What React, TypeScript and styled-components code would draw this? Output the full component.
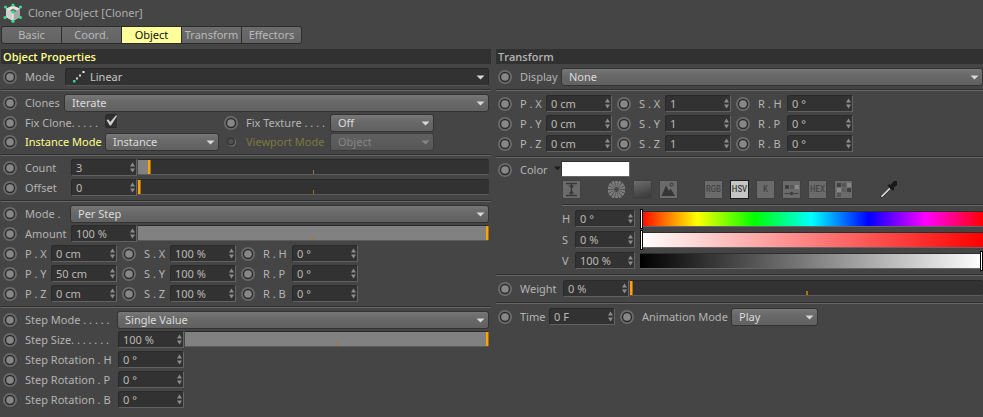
import React, { useId, useState } from "react";
import styled, { createGlobalStyle, css } from "styled-components";

const GlobalStyle = createGlobalStyle`
  *, *::before, *::after { box-sizing: border-box; }
  html { background: #454545; }
  body {
    margin: 0;
    background: #454545;
    color: #b4b4b4;
    font: 11px/16px "Noto Sans", "Open Sans", sans-serif;
  }
  button, input, select { font: inherit; color: inherit; margin: 0; padding: 0; border: 0; }
`;

const Page = styled.main`
  padding-left: 1px;
`;

const TitleBar = styled.header`
  display: flex;
  align-items: center;
  gap: 5px;
  height: 26px;
  padding-left: 2px;
  color: #adadad;
  h1 { margin: 0; font: inherit; }
`;

const Tabs = styled.nav`
  display: flex;
  width: max-content;
  margin: 0 0 5px;
  border: 1px solid #2c2c2c;
  border-radius: 3px;
  background: #2c2c2c;
  gap: 1px;
  overflow: hidden;
`;

const Tab = styled.button<{ $active?: boolean }>`
  width: 59px;
  height: 16px;
  line-height: 16px;
  white-space: nowrap;
  background: ${(p) => (p.$active ? "#ffff99" : "linear-gradient(#6c6c6c, #626262)")};
  color: ${(p) => (p.$active ? "#111" : "#b9b9b9")};
`;

const Columns = styled.div`
  display: grid;
  grid-template-columns: 490fr 487fr;
  gap: 5px;
`;

const Panel = styled.section`
  min-width: 0;
`;

const PanelHeading = styled.h2<{ $active?: boolean }>`
  margin: 0 0 3px;
  padding-left: 2px;
  height: 15px;
  font: 600 11px/15px "Open Sans", "Noto Sans", sans-serif;
  background: #313131;
  color: ${(p) => (p.$active ? "#ffff8f" : "#b4b4b4")};
`;

const Separator = styled.hr`
  height: 2px;
  margin: 2px 0;
  border: 0;
  border-top: 1px solid #2f2f2f;
  background: #666;
`;

const Group = styled.div<{ $flush?: boolean; $roomy?: boolean }>`
  padding: ${(p) => (p.$roomy ? "1px" : "0")} ${(p) => (p.$flush ? "0" : "2px")} 0 2px;
`;

const Row = styled.div<{ $h?: number }>`
  display: flex;
  align-items: flex-start;
  height: ${(p) => p.$h ?? 20}px;
  padding-top: 1px;
`;

const Key = styled.button<{ $gap?: boolean }>`
  flex: none;
  display: flex;
  align-items: center;
  justify-content: center;
  width: 14px;
  height: 18px;
  margin: 0 8px 0 ${(p) => (p.$gap ? 5 : 0)}px;
  background: none;
`;

const Label = styled.label<{ $w: number; $tone?: "active" | "disabled" }>`
  flex: none;
  width: ${(p) => p.$w}px;
  height: 18px;
  line-height: 18px;
  white-space: nowrap;
  color: ${(p) => (p.$tone === "active" ? "#ffff8f" : p.$tone === "disabled" ? "#7b7a3d" : "#b4b4b4")};
`;

const Control = styled.div<{ $w?: number }>`
  position: relative;
  flex: ${(p) => (p.$w ? "none" : "1")};
  min-width: 0;
  width: ${(p) => (p.$w ? p.$w + "px" : "auto")};
  > svg { position: absolute; pointer-events: none; }
`;

const SelectBox = styled.select<{ $dark?: boolean; $indent?: number }>`
  display: block;
  appearance: none;
  width: 100%;
  height: 18px;
  line-height: 16px;
  padding: 0 18px 0 ${(p) => p.$indent ?? 7}px;
  border: 1px solid #333;
  border-radius: 3px;
  outline: 0;
  color: #dcdcdc;
  background: linear-gradient(#777, #696969 40%, #616161);
  ${(p) =>
    p.$dark &&
    css`
      border-color: #292929;
      border-bottom-color: #565656;
      background: #323232;
      color: #c8c8c8;
    `}
  &:disabled {
    opacity: 1;
    color: #868686;
    border-color: #3c3c3c;
    background: linear-gradient(#606060, #575757);
  }
`;

const NumberBox = styled.input`
  display: block;
  width: 100%;
  height: 17px;
  padding: 0 12px 0 4px;
  border: 1px solid #2a2a2a;
  border-right-color: #666;
  border-bottom-color: #606060;
  border-radius: 3px 0 0 0;
  outline: 0;
  background: #323232;
  color: #bdb9b2;
`;

const Slider = styled.input<{ $fill: number }>`
  appearance: none;
  display: block;
  flex: 1;
  min-width: 0;
  height: 16px;
  margin-left: 1px;
  border-top: 1px solid #292929;
  border-bottom: 1px solid #5c5c5c;
  border-radius: 0 2px 2px 0;
  outline: 0;
  background:
    linear-gradient(to right, transparent 50%, #b07312 50%, #b07312 calc(50% + 1px), transparent calc(50% + 1px))
      0 100% / 100% 4px no-repeat,
    linear-gradient(#818181, #818181) 0 0 / ${(p) => p.$fill}% 100% no-repeat,
    #323232;
  &::-webkit-slider-thumb {
    appearance: none;
    width: 3px;
    height: 14px;
    background: #ffa200;
    border-right: 1px solid #a86e10;
  }
`;

const Channels = styled.div`
  padding-top: 1px;
`;

const ColorSlider = styled.input<{ $ramp: string }>`
  appearance: none;
  display: block;
  flex: 1;
  min-width: 0;
  height: 18px;
  margin-left: 5px;
  background: none;
  outline: 0;
  &::-webkit-slider-runnable-track {
    height: 16px;
    border-top: 1px solid #2d2d2d;
    border-bottom: 1px solid #666;
    background: linear-gradient(to right, ${(p) => p.$ramp});
  }
  &::-webkit-slider-thumb {
    appearance: none;
    width: 3px;
    height: 20px;
    margin-top: -3px;
    border: 1px solid #000;
    background: #fff;
  }
`;

const CheckBox = styled.input`
  appearance: none;
  display: block;
  width: 13px;
  height: 14px;
  border-radius: 3px;
  border: 1px solid #2a2a2a;
  border-right-color: #4c4c4c;
  background: #303030;
`;

const Swatch = styled.input`
  appearance: none;
  display: block;
  width: 69px;
  height: 16px;
  border: 1px solid #303030;
  border-right-color: #666;
  border-bottom-color: #666;
  background: #fff;
  &::-webkit-color-swatch-wrapper { padding: 0; }
  &::-webkit-color-swatch { border: 0; }
`;

const ColorLabel = styled.div`
  display: flex;
  flex: none;
  width: 41px;
  svg { flex: none; margin-top: 5px; }
`;

const ColorBody = styled.div`
  padding-left: 64px;
`;

const ModeBar = styled.div`
  display: flex;
  gap: 26px;
  margin-bottom: 5px;
`;

const ModeSet = styled.div`
  display: flex;
  gap: 7px;
`;

const ModeButton = styled.button<{ $on?: boolean; $bare?: boolean }>`
  display: flex;
  align-items: center;
  justify-content: center;
  width: 19px;
  height: 19px;
  overflow: hidden;
  font: 9px/17px "Roboto Condensed", "Liberation Sans Narrow", Roboto, sans-serif;
  border: 1px solid ${(p) => (p.$bare ? "transparent" : p.$on ? "#1c1c1c" : "#404040")};
  color: ${(p) => (p.$on ? "#222" : "#3c3c3c")};
  background: ${(p) => (p.$bare ? "none" : p.$on ? "#c4c4c4" : "#6b6b6b")};
  svg { flex: none; }
`;

const KeyDot = ({ gap, small, name }: { gap?: boolean; small?: boolean; name: string }) => (
  <Key type="button" $gap={gap} disabled={small} aria-label={"Keyframe " + name}>
    {small ? (
      <svg width="14" height="14" viewBox="0 0 14 14">
        <circle cx="7.5" cy="7" r="4.5" fill="#727272" />
        <circle cx="6.8" cy="6.4" r="3.4" fill="#505050" stroke="#333" strokeWidth="1.4" />
      </svg>
    ) : (
      <svg width="14" height="14" viewBox="0 0 14 14">
        <circle cx="7" cy="7" r="7" fill="#6b6b6b" />
        <circle cx="7" cy="7" r="5.2" fill="#2b2b2b" />
        <circle cx="7" cy="7" r="3.8" fill="#878787" />
      </svg>
    )}
  </Key>
);

const NumberField = ({ id, value, w = 66 }: { id: string; value: string; w?: number }) => (
  <Control $w={w}>
    <NumberBox id={id} type="text" defaultValue={value} />
    <svg width="7" height="11" viewBox="0 0 7 11" style={{ right: 1, top: 3 }}>
      <path d="M3.5 0.5 6 4.5H1zM3.5 10.5 6 6.5H1z" fill="#8c8c8c" />
    </svg>
  </Control>
);

type SelectProps = { id: string; value: string; w?: number; dark?: boolean; disabled?: boolean };
const SelectField = ({ id, value, w, dark, disabled }: SelectProps) => (
  <Control $w={w}>
    <SelectBox id={id} $dark={dark} $indent={dark ? 24 : undefined} disabled={disabled}>
      <option>{value}</option>
    </SelectBox>
    {dark && (
      <svg width="14" height="13" viewBox="0 0 14 13" style={{ left: 7, top: 2 }}>
        <path d="M1 10h2.5v2.5H1z" fill="#35d68c" />
        <path d="M4 7.5h2v2H4zM7 4.5h2v2H7z" fill="#d5d5d5" />
        <path d="M10.500 1h2v2h-2z" fill="#f2f2f2" />
      </svg>
    )}
    <svg width="9" height="5" viewBox="0 0 9 5" style={{ right: 4, top: 7 }}>
      <path d="M0.500 0.500h8L4.500 4.500z" fill={disabled ? "#868686" : "#d8d8d8"} />
    </svg>
  </Control>
);

const RangeField = ({ name, start }: { name: string; start: number }) => {
  const [value, setValue] = useState(start);
  return (
    <Slider
      type="range"
      aria-label={name}
      $fill={value}
      value={value}
      onChange={(e) => setValue(Number(e.target.value))}
    />
  );
};

type EntryProps = { label: string; w: number; value: string; gap?: boolean };
const Entry = ({ label, w, value, gap }: EntryProps) => {
  const id = useId();
  return (
    <>
      <KeyDot gap={gap} name={label} />
      <Label $w={w} htmlFor={id}>{label}</Label>
      <NumberField id={id} value={value} />
    </>
  );
};

const VectorRows = ({ rows }: { rows: string[][] }) => (
  <>
    {rows.map(([p, pv, s, sv, r, rv]) => (
      <Row key={p}>
        <Entry label={p} w={26} value={pv} />
        <Entry gap label={s} w={26} value={sv} />
        <Entry gap label={r} w={29} value={rv} />
      </Row>
    ))}
  </>
);

const CubeIcon = () => (
  <svg width="20" height="20" viewBox="0 0 20 20" aria-hidden="true">
    <path d="M10 2.500 17 5.500V14L10 18 3 14V5.500z" fill="#e4e4e4" />
    <path d="M10 9.500 17 5.500V14L10 18z" fill="#a8a8a8" />
    <path d="M10 9.500 3 5.500V14L10 18z" fill="#cfcfcf" />
    <path d="M7 7.500 10 5.500l3.500 2-1 1.500L10 10z" fill="#777" />
    <path d="M10 10v7" stroke="#f4f4f4" />
    <g fill="#2fe08c">
      <circle cx="10" cy="2" r="1.600" />
      <circle cx="2.500" cy="4" r="1.600" />
      <circle cx="17.500" cy="4" r="1.600" />
      <circle cx="10" cy="9" r="1.600" />
      <circle cx="2" cy="14.500" r="1.600" />
      <circle cx="17.500" cy="14.500" r="1.600" />
      <circle cx="10" cy="18.300" r="1.600" />
    </g>
  </svg>
);

const CompactIcon = () => (
  <svg width="17" height="17" viewBox="0 0 17 17">
    <path d="M3 2.500h11M3 14.500h11" stroke="#383838" strokeWidth="1.600" />
    <path d="M8.500 2v13" stroke="#383838" strokeWidth="1.400" />
    <path d="M5.500 4.500h6l-3 3zM5.500 12.500h6l-3-3z" fill="#383838" />
  </svg>
);

const WheelIcon = () => (
  <svg width="19" height="19" viewBox="0 0 19 19">
    {Array.from({ length: 14 }, (_, i) => (
      <path key={i} d="M8.900 6.200 7.900 0.500h3.200l-1 5.700z" fill="#7d7d7d" transform={`rotate(${(i * 360) / 14} 9.500 9.500)`} />
    ))}
    <circle cx="9.500" cy="9.500" r="3" fill="#484848" stroke="#7d7d7d" strokeWidth="1" />
  </svg>
);

const SpectrumIcon = () => (
  <svg width="17" height="17" viewBox="0 0 17 17">
    <defs>
      <linearGradient id="spectrum" x1="0" y1="0" x2="0.300" y2="1">
        <stop offset="0" stopColor="#6e6e6e" />
        <stop offset="1" stopColor="#3e3e3e" />
      </linearGradient>
    </defs>
    <path d="M0 0h17v17H0z" fill="url(#spectrum)" />
  </svg>
);

const PictureIcon = () => (
  <svg width="17" height="17" viewBox="0 0 17 17">
    <path d="M1.500 15 6 4.500l3 5.500 1.500-2.500L15 15z" fill="#363636" />
    <circle cx="11.500" cy="3.500" r="1.500" fill="none" stroke="#363636" />
  </svg>
);

const MixerIcon = () => (
  <svg width="17" height="17" viewBox="0 0 17 17">
    <path d="M2 4h4v4H2z" fill="#404040" />
    <path d="M7 4h4v4H7z" fill="#575757" />
    <path d="M12 4h4v4h-4z" fill="#8a8a8a" />
    <path d="M1.500 12.500h14" stroke="#404040" />
    <circle cx="8.500" cy="12.500" r="1.800" fill="#404040" />
  </svg>
);

const SwatchesIcon = () => (
  <svg width="17" height="17" viewBox="0 0 17 17">
    <path d="M2 2h4v4H2zM12 7h4v4h-4z" fill="#404040" />
    <path d="M7 2h4v4H7zM2 12h4v4H2z" fill="#555" />
    <path d="M12 2h4v4h-4zM2 7h4v4H2z" fill="#888" />
    <path d="M7 7h4v4H7z" fill="#5e5e5e" />
  </svg>
);

const DropperIcon = () => (
  <svg width="19" height="19" viewBox="0 0 19 19">
    <path d="M1.200 17.800 2 15.500 10.200 7.300l1.700 1.700-8.200 8.200z" fill="#d6d6d6" stroke="#222" strokeWidth="0.900" />
    <path d="M8.500 5.500 10 4.200l1.500.9 2.500-3.200c1.300-1.400 3-1.400 4-.4s.9 2.600-.4 3.900L14.500 7.800l.8 1.400-1.400 1.500z" fill="#181818" />
  </svg>
);

const colorRows = [
  { name: "H", value: "0 °", at: 0, ramp: "#f00, #ff0, #0f0, #0ff, #00f, #f0f, #f00" },
  { name: "S", value: "0 %", at: 0, ramp: "#fff, #f00" },
  { name: "V", value: "100 %", at: 100, ramp: "#000, #fff" },
];

const ObjectPanel = () => (
  <Panel>
    <PanelHeading $active>Object Properties</PanelHeading>
    <Group>
      <Row>
        <KeyDot name="Mode" />
        <Label $w={40} htmlFor="mode">Mode</Label>
        <SelectField id="mode" value="Linear" dark />
      </Row>
    </Group>
    <Separator />
    <Group>
      <Row>
        <KeyDot name="Clones" />
        <Label $w={39} htmlFor="clones">Clones</Label>
        <SelectField id="clones" value="Iterate" />
      </Row>
      <Row $h={19}>
        <KeyDot name="Fix Clone" />
        <Label $w={80} htmlFor="fix-clone">Fix Clone. . . . .</Label>
        <Control $w={114}>
          <CheckBox id="fix-clone" type="checkbox" defaultChecked />
          <svg width="14" height="14" viewBox="0 0 14 14" style={{ left: 0, top: 0 }}>
            <path d="M1.500 6 3.500 5.500 5.200 8 11 1.200 12 2 6 11.500H4.800z" fill="#d0d0d0" />
          </svg>
        </Control>
        <KeyDot gap name="Fix Texture" />
        <Label $w={84} htmlFor="fix-texture">Fix Texture . . . .</Label>
        <SelectField id="fix-texture" value="Off" w={104} />
      </Row>
      <Row>
        <KeyDot name="Instance Mode" />
        <Label $w={80} $tone="active" htmlFor="instance-mode">Instance Mode</Label>
        <SelectField id="instance-mode" value="Instance" w={114} />
        <KeyDot gap small name="Viewport Mode" />
        <Label $w={84} $tone="disabled" htmlFor="viewport-mode">Viewport Mode</Label>
        <SelectField id="viewport-mode" value="Object" w={104} disabled />
      </Row>
    </Group>
    <Separator />
    <Group>
      <Row>
        <Entry label="Count" w={46} value="3" />
        <RangeField name="Count" start={3} />
      </Row>
      <Row>
        <Entry label="Offset" w={46} value="0" />
        <RangeField name="Offset" start={0} />
      </Row>
    </Group>
    <Separator />
    <Group>
      <Row>
        <KeyDot name="Step mode" />
        <Label $w={45} htmlFor="per-step">Mode .</Label>
        <SelectField id="per-step" value="Per Step" />
      </Row>
      <Row>
        <Entry label="Amount" w={46} value="100 %" />
        <RangeField name="Amount" start={100} />
      </Row>
      <VectorRows
        rows={[
          ["P . X", "0 cm", "S . X", "100 %", "R . H", "0 °"],
          ["P . Y", "50 cm", "S . Y", "100 %", "R . P", "0 °"],
          ["P . Z", "0 cm", "S . Z", "100 %", "R . B", "0 °"],
        ]}
      />
    </Group>
    <Separator />
    <Group>
      <Row>
        <KeyDot name="Step Mode" />
        <Label $w={92} htmlFor="step-mode">Step Mode . . . . .</Label>
        <SelectField id="step-mode" value="Single Value" />
      </Row>
      <Row>
        <Entry label="Step Size. . . . . . ." w={93} value="100 %" />
        <RangeField name="Step Size" start={100} />
      </Row>
      {["H", "P", "B"].map((axis) => (
        <Row key={axis}>
          <Entry label={"Step Rotation . " + axis} w={93} value="0 °" />
        </Row>
      ))}
    </Group>
  </Panel>
);

const TransformPanel = () => (
  <Panel>
    <PanelHeading>Transform</PanelHeading>
    <Group $flush>
      <Row>
        <KeyDot name="Display" />
        <Label $w={41} htmlFor="display">Display</Label>
        <SelectField id="display" value="None" />
      </Row>
    </Group>
    <Separator />
    <Group $flush $roomy>
      <VectorRows
        rows={[
          ["P . X", "0 cm", "S . X", "1", "R . H", "0 °"],
          ["P . Y", "0 cm", "S . Y", "1", "R . P", "0 °"],
          ["P . Z", "0 cm", "S . Z", "1", "R . B", "0 °"],
        ]}
      />
    </Group>
    <Separator />
    <Group $flush>
      <Row>
        <KeyDot name="Color" />
        <ColorLabel>
          <Label $w={34} htmlFor="color">Color</Label>
          <svg width="7" height="5" viewBox="0 0 7 5"><path d="M0 .5h7L3.500 4.500z" fill="#1c1c1c" /></svg>
        </ColorLabel>
        <Swatch id="color" type="color" defaultValue="#ffffff" />
      </Row>
      <ColorBody>
        <ModeBar>
          <ModeButton type="button" aria-label="Compact mode"><CompactIcon /></ModeButton>
          <ModeSet>
            <ModeButton type="button" $bare aria-label="Color wheel"><WheelIcon /></ModeButton>
            <ModeButton type="button" aria-label="Spectrum"><SpectrumIcon /></ModeButton>
            <ModeButton type="button" aria-label="Color from picture"><PictureIcon /></ModeButton>
          </ModeSet>
          <ModeSet>
            <ModeButton type="button">RGB</ModeButton>
            <ModeButton type="button" $on>HSV</ModeButton>
            <ModeButton type="button">K</ModeButton>
            <ModeButton type="button" aria-label="Color mixer"><MixerIcon /></ModeButton>
            <ModeButton type="button">HEX</ModeButton>
            <ModeButton type="button" aria-label="Swatches"><SwatchesIcon /></ModeButton>
          </ModeSet>
          <ModeButton type="button" $bare aria-label="Color picker"><DropperIcon /></ModeButton>
        </ModeBar>
        <Separator />
        <Channels>
          {colorRows.map((c) => (
            <Row key={c.name} $h={21}>
              <Label $w={13} htmlFor={"color-" + c.name}>{c.name}</Label>
              <NumberField id={"color-" + c.name} value={c.value} w={60} />
              <ColorSlider type="range" aria-label={c.name} $ramp={c.ramp} defaultValue={c.at} />
            </Row>
          ))}
        </Channels>
      </ColorBody>
    </Group>
    <Separator />
    <Group $flush $roomy>
      <Row $h={21}>
        <Entry label="Weight" w={43} value="0 %" />
        <RangeField name="Weight" start={0} />
      </Row>
    </Group>
    <Separator />
    <Group $flush $roomy>
      <Row>
        <Entry label="Time" w={29} value="0 F" />
        <KeyDot gap name="Animation Mode" />
        <Label $w={89} htmlFor="animation-mode">Animation Mode</Label>
        <SelectField id="animation-mode" value="Play" w={87} />
      </Row>
    </Group>
  </Panel>
);

export default function App() {
  const [tab, setTab] = useState("Object");
  return (
    <Page>
      <GlobalStyle />
      <TitleBar>
        <CubeIcon />
        <h1>Cloner Object [Cloner]</h1>
      </TitleBar>
      <Tabs>
        {["Basic", "Coord.", "Object", "Transform", "Effectors"].map((name) => (
          <Tab key={name} type="button" $active={name === tab} onClick={() => setTab(name)}>
            {name}
          </Tab>
        ))}
      </Tabs>
      <Columns>
        <ObjectPanel />
        <TransformPanel />
      </Columns>
    </Page>
  );
}
